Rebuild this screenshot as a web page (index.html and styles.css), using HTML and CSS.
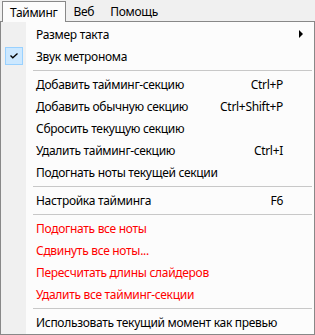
FILE: index.html
```html
<!DOCTYPE html>
<html lang="ru">

<head>
    <meta charset="UTF-8">
    <meta name="viewport" content="width=device-width, initial-scale=1.0">
    <title>Тайминг</title>
    <link rel="stylesheet" href="styles.css">
</head>

<body>
    <div class="menubar">
        <span class="top-item active">Тайминг</span>
        <span class="top-item">Веб</span>
        <span class="top-item">Помощь</span>
    </div>

    <ul class="dropdown">
        <li class="row">
            <span class="icon"></span>
            <span class="label">Размер такта</span>
            <svg class="arrow" width="5" height="8" viewBox="0 0 5 8"><polygon points="0,0 4,4 0,8" fill="#000"/></svg>
        </li>
        <li class="row">
            <span class="icon checked">
                <svg width="8" height="6" viewBox="0 0 8 6"><polyline points="0.5,2.5 2.8,4.8 7.5,0.5" fill="none" stroke="#000" stroke-width="1.3"/></svg>
            </span>
            <span class="label">Звук метронома</span>
        </li>
        <li class="sep"></li>
        <li class="row">
            <span class="icon"></span>
            <span class="label">Добавить тайминг-секцию</span>
            <span class="shortcut">Ctrl+P</span>
        </li>
        <li class="row">
            <span class="icon"></span>
            <span class="label">Добавить обычную секцию</span>
            <span class="shortcut">Ctrl+Shift+P</span>
        </li>
        <li class="row">
            <span class="icon"></span>
            <span class="label">Сбросить текущую секцию</span>
        </li>
        <li class="row">
            <span class="icon"></span>
            <span class="label">Удалить тайминг-секцию</span>
            <span class="shortcut">Ctrl+I</span>
        </li>
        <li class="row">
            <span class="icon"></span>
            <span class="label">Подогнать ноты текущей секции</span>
        </li>
        <li class="sep"></li>
        <li class="row">
            <span class="icon"></span>
            <span class="label">Настройка тайминга</span>
            <span class="shortcut">F6</span>
        </li>
        <li class="sep"></li>
        <li class="row danger">
            <span class="icon"></span>
            <span class="label">Подогнать все ноты</span>
        </li>
        <li class="row danger">
            <span class="icon"></span>
            <span class="label">Сдвинуть все ноты...</span>
        </li>
        <li class="row danger">
            <span class="icon"></span>
            <span class="label">Пересчитать длины слайдеров</span>
        </li>
        <li class="row danger">
            <span class="icon"></span>
            <span class="label">Удалить все тайминг-секции</span>
        </li>
        <li class="sep"></li>
        <li class="row">
            <span class="icon"></span>
            <span class="label">Использовать текущий момент как превью</span>
        </li>
    </ul>
</body>

</html>
```

FILE: styles.css
```css
body {
    margin: 0;
    font-family: 'Segoe UI', 'Noto Sans', sans-serif;
    font-size: 12px;
    letter-spacing: -0.3px;
    color: #000;
    background-color: #f0f0f0;
}

.menubar {
    display: flex;
    height: 21px;
    padding-left: 2px;
    background-color: #f0f0f0;
}

.top-item {
    display: flex;
    align-items: center;
    padding: 0 7px;
    border: 1px solid transparent;
    border-bottom: none;
    margin-top: 1px;
}

.top-item.active {
    background-color: #fcfcfc;
    border-color: #888;
    position: relative;
    z-index: 1;
    margin-bottom: -1px;
}

.dropdown {
    list-style: none;
    margin: 0;
    padding: 1px 0;
    width: 313px;
    border: 1px solid #888;
    background: linear-gradient(to right, #f0f0f0 0, #f0f0f0 25px, #fcfcfc 25px);
}

.row {
    display: flex;
    align-items: center;
    height: 22px;
    padding-left: 4px;
}

.icon {
    width: 18px;
    height: 18px;
    margin-right: 13px;
    box-sizing: border-box;
    display: flex;
    align-items: center;
    justify-content: center;
}

.icon.checked {
    background-color: #cce8ff;
    border: 1px solid #99d1ff;
}

.label {
    white-space: nowrap;
}

.shortcut {
    margin-left: auto;
    margin-right: 31px;
}

.arrow {
    margin-left: auto;
    margin-right: 10px;
}

.danger {
    color: #ff0000;
}

.sep {
    height: 6px;
    margin-left: 32px;
    margin-right: 2px;
    background: linear-gradient(#c8c8c8, #c8c8c8) no-repeat 0 3px / 100% 1px;
}
```
